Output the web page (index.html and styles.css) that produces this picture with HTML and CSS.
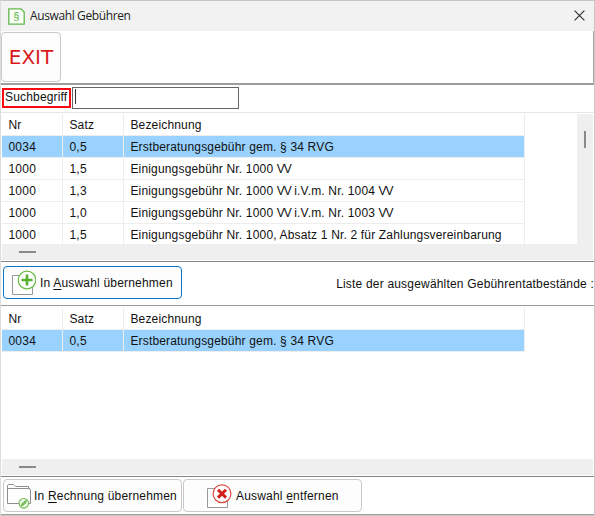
FILE: index.html
```html
<!DOCTYPE html>
<html lang="de">
<head>
<meta charset="utf-8">
<title>Auswahl Gebühren</title>
<link rel="stylesheet" href="styles.css">
</head>
<body>
<div class="window">
  <header class="titlebar">
    <svg class="app-icon" width="17" height="17" viewBox="0 0 17 17"><path d="M.8.8H13L16.2 4V16.2H.8Z" fill="#fafff8" stroke="#62b84c" stroke-width="1.3"/><text x="8.3" y="12" text-anchor="middle" class="section-sign">§</text></svg>
    <h1 class="title">Auswahl Gebühren</h1>
    <svg class="close" width="11" height="11" viewBox="0 0 11 11"><path d="M.6.6 10.4 10.4M10.4.6.6 10.4" stroke="#333" stroke-width="1.2"/></svg>
  </header>
  <div class="toolbar"><button class="button exit">EXIT</button></div>
  <div class="search">
    <label class="search-label" for="q">Suchbegriff</label>
    <div class="search-input" id="q"><span class="caret"></span></div>
  </div>
  <section class="list list-source">
    <div class="viewport">
      <div class="grid">
        <div class="row head"><span>Nr</span><span>Satz</span><span>Bezeichnung</span></div>
        <div class="row selected"><span>0034</span><span>0,5</span><span>Erstberatungsgebühr gem. § 34 RVG</span></div>
        <div class="row"><span>1000</span><span>1,5</span><span>Einigungsgebühr Nr. 1000 <i>VV</i></span></div>
        <div class="row"><span>1000</span><span>1,3</span><span>Einigungsgebühr Nr. 1000 <i>VV</i> i.V.m. Nr. 1004 <i>VV</i></span></div>
        <div class="row"><span>1000</span><span>1,0</span><span>Einigungsgebühr Nr. 1000 <i>VV</i> i.V.m. Nr. 1003 <i>VV</i></span></div>
        <div class="row"><span>1000</span><span>1,5</span><span>Einigungsgebühr Nr. 1000, Absatz 1 Nr. 2 für Zahlungsvereinbarung</span></div>
      </div>
      <div class="vscroll"><div class="vthumb"></div></div>
    </div>
    <div class="hscroll"><div class="hthumb"></div></div>
  </section>
  <div class="actions middle">
    <button class="button add">
      <svg width="25" height="26" viewBox="0 0 25 26"><path d="M1.5 5.5H21.5V24.5H1.5Z" fill="#fff" stroke="#999"/><circle cx="16" cy="10" r="8.8" fill="#fff" stroke="#6cbd45" stroke-width="1.2"/><path d="M16 4.5V15.5M10.5 10H21.5" stroke="#55b030" stroke-width="2.6"/></svg>
      <span>In <u>A</u>uswahl übernehmen</span>
    </button>
    <span class="caption">Liste der ausgewählten Gebührentatbestände :</span>
  </div>
  <section class="list list-target">
    <div class="viewport">
      <div class="grid">
        <div class="row head"><span>Nr</span><span>Satz</span><span>Bezeichnung</span></div>
        <div class="row selected"><span>0034</span><span>0,5</span><span>Erstberatungsgebühr gem. § 34 RVG</span></div>
      </div>
    </div>
    <div class="hscroll"><div class="hthumb"></div></div>
  </section>
  <div class="actions bottom">
    <button class="button invoice">
      <svg width="25" height="25" viewBox="0 0 25 25"><path d="M1.5 19.5V1.5L2.5.5H7.5L9.5 2.5H22.5V4.5L24.5 5.5V19.5Z" fill="#fff" stroke="#8e8e8e"/><path d="M1.5 4.5H24" stroke="#8e8e8e"/><circle cx="17.8" cy="19.3" r="4.8" fill="#edf8e8" stroke="#69b84a" stroke-width="1.1"/><path d="M15.2 22 16.6 18.8 18.2 20.4ZM20.5 16.6 19.1 19.8 17.5 18.2Z" fill="#69b84a" stroke="#69b84a"/></svg>
      <span>In <u>R</u>echnung übernehmen</span>
    </button>
    <button class="button remove">
      <svg width="25" height="25" viewBox="0 0 25 25"><path d="M.5 4.5H20.5V23.5H.5Z" fill="#fff" stroke="#999"/><circle cx="15" cy="9.7" r="8.9" fill="#fff" stroke="#dc4b43" stroke-width="1.2"/><path d="M11 5.8 19 13.6M19 5.8 11 13.6" stroke="#d3201c" stroke-width="3"/></svg>
      <span>Auswahl <u>e</u>ntfernen</span>
    </button>
  </div>
</div>
</body>
</html>
```
FILE: styles.css
```css
* { box-sizing: border-box; }
body { margin: 0; background: #fff; font: 12px/16px "Liberation Sans", Arial, sans-serif; letter-spacing: .17px; color: #111; }
.window {
  width: 595px; height: 516px; overflow: hidden;
  display: flex; flex-direction: column;
  border-top: 1px solid #c4c4c4; border-left: 1px solid #dcdcdc; border-right: 1px solid #c8c8c8; border-bottom: 1px solid #c8c8c8;
}
.titlebar { flex: none; height: 30px; display: flex; align-items: center; padding: 0 9px 0 7px; background: #f2f2f2; }
.close { margin-top: -1px; }
.section-sign { font: 11px "Liberation Sans", sans-serif; fill: #55b03c; letter-spacing: 0; }
.title { flex: 1; margin: 0 0 0 5px; font: 12px/16px "Open Sans", sans-serif; letter-spacing: -.38px; color: #222; }
.toolbar { flex: none; height: 54px; padding: 1px 0 0; border-bottom: 2px solid #9d9d9d; border-right: 1px solid #aaa; }
.button {
  display: flex; align-items: center; padding: 0; border: 1px solid #c9c9c9; border-radius: 4px;
  background: #fdfdfd; font: inherit; letter-spacing: .19px; color: #111; white-space: pre;
}
.exit { width: 60px; height: 50px; justify-content: center; font: 20px/24px "DejaVu Sans", sans-serif; letter-spacing: 0; color: #d9191c; }
.search { flex: none; height: 28px; display: flex; align-items: flex-start; padding: 2px 0 0 1px; border-bottom: 1px solid #e6e6e6; }
.search-label { width: 69px; height: 20px; margin-top: 1px; border: 2px solid #fa0a10; padding-left: 1px; line-height: 15px; }
.search-input { width: 167px; height: 22px; margin-left: 1px; border: 1px solid #666; padding: 1px; }
.caret { display: block; width: 1px; height: 15px; margin-left: 1px; background: #333; }
.list { flex: none; display: flex; flex-direction: column; padding-left: 1px; border-bottom: 1px solid #858585; }
.list-source { height: 149px; padding-top: 1px; }
.list-target { height: 171px; padding-top: 2px; }
.viewport { flex: 1; min-height: 0; display: flex; justify-content: space-between; overflow: hidden; }
.grid { width: 523px; }
.row { display: grid; grid-template-columns: 61px 61px 401px; height: 22px; line-height: 20px; white-space: pre; }
.row > span { padding: 1px 0 0 6.4px; border-right: 1px solid #ededed; border-bottom: 1px solid #ededed; }
.row:not(.head) > span:not(:last-child) { letter-spacing: .3px; }
.row i { font-style: normal; letter-spacing: -1px; }
.selected > span { background: #99d1ff; }
.vscroll { width: 16px; background: #efefef; margin-right: 1px; padding: 17px 0 0 6.5px; }
.vthumb { width: 2px; height: 17px; background: #8a8a8a; }
.hscroll { flex: none; height: 16px; margin: 0 1px 1px 0; padding: 7px 0 0 17px; background: #efefef; }
.hthumb { width: 17px; height: 2px; background: #8a8a8a; }
.actions { flex: none; display: flex; }
.middle { height: 44px; padding: 4px 0 0 2px; justify-content: space-between; border-bottom: 1px solid #9a9a9a; }
.add { width: 179px; height: 33px; border-color: #0b76c9; padding-left: 7px; gap: 4px; }
.caption { margin-top: 10px; letter-spacing: .19px; }
.bottom { height: 38px; padding: 2px 0 0 2px; gap: 1px; border-bottom: 1px solid #9d9d9d; }
.invoice { width: 179px; height: 33px; padding-left: 2px; gap: 3px; }
.bottom svg { margin-top: 1px; }
.remove { width: 179px; height: 33px; padding-left: 23px; gap: 4px; }
u { text-underline-offset: 2px; text-decoration-skip-ink: none; }
```
